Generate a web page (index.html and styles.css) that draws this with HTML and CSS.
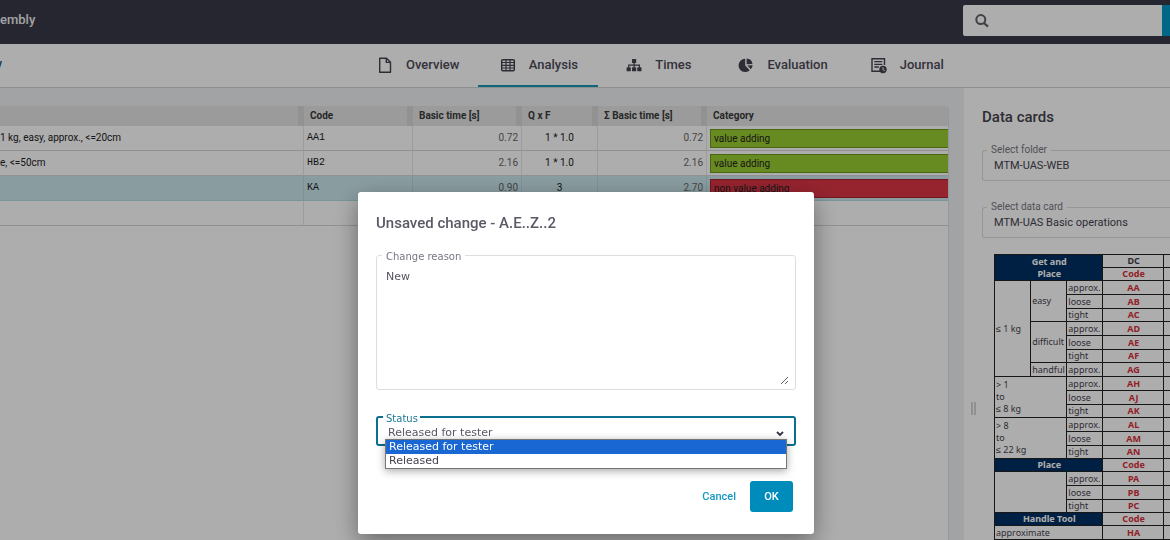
FILE: index.html
```html
<!DOCTYPE html>
<html lang="en">
<head>
<meta charset="utf-8">
<title>Analysis</title>
<link rel="stylesheet" href="styles.css">
</head>
<body>
<div class="app">
  <header class="topbar">
    <span class="topbar-title">embly</span>
    <form class="search">
      <label class="search-box" aria-label="Search">
        <svg width="14" height="14" viewBox="0 0 14 14"><circle cx="5.8" cy="5.6" r="4.5" fill="none" stroke="#5f5f66" stroke-width="2"/><path d="M9 9l4 3.600" stroke="#5f5f66" stroke-width="2.200"/></svg>
        <input type="search">
      </label>
      <button class="search-go" type="submit" aria-label="Go"></button>
    </form>
  </header>

  <nav class="tabs">
    <div class="tabs-lead"><a class="crumb" href="#">y</a></div>
    <a class="tab" href="#"><svg class="icon" viewBox="0 0 18 18"><path d="M3.700 2.200h6.800l4 4v10.100H3.700zM10.300 2.200v4.200h4.200" fill="none" stroke="#45434f" stroke-width="1.400" stroke-linejoin="round"/></svg>Overview</a>
    <a class="tab active" href="#"><svg class="icon" viewBox="0 0 18 18"><rect x="2.700" y="3.700" width="12.600" height="11" rx="1" fill="none" stroke="#45434f" stroke-width="1.500"/><path d="M3 6.500h12M3 9.300h12M3 12h12M7 4v10.500M11 4v10.500" stroke="#45434f" stroke-width="1.200"/></svg>Analysis</a>
    <a class="tab" href="#"><svg class="icon" viewBox="0 0 18 18"><g fill="#45434f"><rect x="7" y="3" width="4.200" height="4" rx=".6"/><rect x="1.600" y="11.300" width="4.200" height="4" rx=".6"/><rect x="7" y="11.300" width="4.200" height="4" rx=".6"/><rect x="12.300" y="11.300" width="4.200" height="4" rx=".6"/></g><path d="M9.100 6.500v5M3.700 11.500V9.200h10.700v2.300" fill="none" stroke="#45434f" stroke-width="1.200"/></svg>Times</a>
    <a class="tab" href="#"><svg class="icon" viewBox="0 0 18 18"><g fill="#45434f"><path d="M8.200 2.800v6.600l4.500 4.800A6.600 6.600 0 1 1 8.200 2.800z"/><path d="M9.600 2.500a6.300 6.300 0 0 1 5.900 5.600L9.600 8.300z"/><path d="M10.300 9.500l5.300-.2a6 6 0 0 1-1.700 4z"/></g></svg>Evaluation</a>
    <a class="tab" href="#"><svg class="icon" viewBox="0 0 18 18"><path d="M10 15.300H2V2.700h12.500V9" fill="none" stroke="#45434f" stroke-width="1.400"/><path d="M4.300 5.700h8M4.300 8.300h8M4.300 11h4.500" stroke="#45434f" stroke-width="1.300"/><circle cx="13" cy="13.500" r="3.700" fill="#45434f"/><path d="M13 11.300v2.400l1.700 1" fill="none" stroke="#fff" stroke-width="1"/></svg>Journal</a>
  </nav>

  <main class="workspace">
    <section class="analysis">
      <div class="sheet">
        <table class="steps">
          <colgroup><col class="c-name"><col class="c-wide"><col class="c-wide"><col class="c-qf"><col class="c-wide"><col></colgroup>
          <thead><tr><th></th><th>Code</th><th>Basic time [s]</th><th>Q x F</th><th>Σ Basic time [s]</th><th>Category</th></tr></thead>
          <tbody>
            <tr><td class="name">1 kg, easy, approx., &lt;=20cm</td><td class="code">AA1</td><td class="num">0.72</td><td class="qf">1 * 1.0</td><td class="num">0.72</td><td class="cat"><div class="tag good">value adding</div></td></tr>
            <tr><td class="name">e, &lt;=50cm</td><td class="code">HB2</td><td class="num">2.16</td><td class="qf">1 * 1.0</td><td class="num">2.16</td><td class="cat"><div class="tag good">value adding</div></td></tr>
            <tr class="selected"><td class="name"></td><td class="code">KA</td><td class="num">0.90</td><td class="qf">3</td><td class="num">2.70</td><td class="cat"><div class="tag bad">non value adding</div></td></tr>
            <tr><td></td><td></td><td></td><td></td><td></td><td></td></tr>
          </tbody>
        </table>
      </div>
    </section>

    <aside class="cards">
      <div class="grip"><span></span></div>
      <div class="cards-body">
        <h2>Data cards</h2>
        <fieldset class="field side">
          <legend><label for="folder">Select folder</label></legend>
          <select id="folder"><option>MTM-UAS-WEB</option></select>
        </fieldset>
        <fieldset class="field side">
          <legend><label for="card">Select data card</label></legend>
          <select id="card"><option>MTM-UAS Basic operations</option></select>
        </fieldset>
        <table class="card">
          <colgroup><col class="k1"><col class="k1"><col class="k1"><col class="k2"><col class="k2"></colgroup>
          <tbody>
            <tr class="low"><th class="band" colspan="3" rowspan="2">Get and<br>Place</th><th>DC</th><td></td></tr>
            <tr class="low"><th class="red">Code</th><td></td></tr>
            <tr><td rowspan="7">≤ 1 kg</td><td rowspan="3">easy</td><td>approx.</td><th class="red">AA</th><td></td></tr>
            <tr><td>loose</td><th class="red">AB</th><td></td></tr>
            <tr class="low"><td>tight</td><th class="red">AC</th><td></td></tr>
            <tr><td rowspan="3">difficult</td><td>approx.</td><th class="red">AD</th><td></td></tr>
            <tr><td>loose</td><th class="red">AE</th><td></td></tr>
            <tr class="low"><td>tight</td><th class="red">AF</th><td></td></tr>
            <tr><td>handful</td><td>approx.</td><th class="red">AG</th><td></td></tr>
            <tr><td colspan="2" rowspan="3">&gt; 1<br>to<br>≤ 8 kg</td><td>approx.</td><th class="red">AH</th><td></td></tr>
            <tr><td>loose</td><th class="red">AJ</th><td></td></tr>
            <tr class="low"><td>tight</td><th class="red">AK</th><td></td></tr>
            <tr><td colspan="2" rowspan="3">&gt; 8<br>to<br>≤ 22 kg</td><td>approx.</td><th class="red">AL</th><td></td></tr>
            <tr><td>loose</td><th class="red">AM</th><td></td></tr>
            <tr class="low"><td>tight</td><th class="red">AN</th><td></td></tr>
            <tr class="low"><th class="band" colspan="3">Place</th><th class="red">Code</th><td></td></tr>
            <tr><td colspan="2" rowspan="3"></td><td>approx.</td><th class="red">PA</th><td></td></tr>
            <tr><td>loose</td><th class="red">PB</th><td></td></tr>
            <tr class="low"><td>tight</td><th class="red">PC</th><td></td></tr>
            <tr class="low"><th class="band" colspan="3">Handle Tool</th><th class="red">Code</th><td></td></tr>
            <tr><td colspan="3">approximate</td><th class="red">HA</th><td></td></tr>
          </tbody>
        </table>
      </div>
    </aside>
  </main>
</div>

<div class="backdrop">
  <form class="dialog" role="dialog" aria-modal="true" aria-labelledby="dlg-title">
    <h1 id="dlg-title">Unsaved change - A.E..Z..2</h1>
    <fieldset class="field reason">
      <legend><label for="reason">Change reason</label></legend>
      <textarea id="reason">New</textarea>
    </fieldset>
    <fieldset class="field status">
      <legend><label for="status">Status</label></legend>
      <select id="status"><option>Released for tester</option><option>Released</option></select>
      <svg class="chevron" width="8" height="6" viewBox="0 0 8 6"><path d="M1 1l3 3 3-3" fill="none" stroke="#333340" stroke-width="1.800"/></svg>
      <ul class="options" role="listbox" aria-label="Status">
        <li class="current" role="option" aria-selected="true">Released for tester</li>
        <li role="option" aria-selected="false">Released</li>
      </ul>
    </fieldset>
    <div class="actions">
      <button class="cancel" type="button">Cancel</button>
      <button class="ok" type="submit">OK</button>
    </div>
  </form>
</div>
</body>
</html>
```

FILE: styles.css
```css
* { box-sizing: border-box; }

body {
  margin: 0;
  font-family: Roboto, "Liberation Sans", sans-serif;
  color: #45434f;
  overflow: hidden;
}

.app {
  display: flex;
  flex-direction: column;
  height: 100vh;
  background: #fff;
}

/* Top bar */
.topbar {
  flex: none;
  display: flex;
  align-items: flex-start;
  justify-content: space-between;
  height: 44px;
  background: #393847;
}
.topbar-title {
  line-height: 40px;
  font-size: 13px;
  font-weight: 500;
  color: #f0f0f2;
}
.search {
  display: flex;
  width: 207px;
  height: 31px;
  margin-top: 5px;
}
.search-box {
  flex: 1;
  display: flex;
  align-items: center;
  gap: 8px;
  min-width: 0;
  padding-left: 12px;
  background: #fff;
  border-radius: 2px 0 0 2px;
}
.search-box svg { flex: none; }
.search-box input {
  flex: 1;
  min-width: 0;
  border: 0;
  outline: 0;
  background: none;
}
.search-go {
  flex: none;
  width: 8px;
  padding: 0;
  border: 0;
  background: #0098c8;
}

/* Tabs */
.tabs {
  flex: none;
  display: flex;
  height: 44px;
  border-bottom: 1px solid #d0d2d5;
}
.tabs-lead {
  flex: 0 0 357px;
  display: flex;
}
.crumb {
  display: flex;
  justify-content: flex-end;
  width: 2px;
  overflow: hidden;
  line-height: 40px;
  font-size: 13px;
  font-weight: 500;
  color: #1a5a80;
  text-decoration: none;
}
.tab {
  display: flex;
  align-items: center;
  justify-content: center;
  gap: 12px;
  min-width: 120px;
  padding: 0 19px;
  border-bottom: 2px solid transparent;
  font-size: 13px;
  font-weight: 500;
  color: #4c4a57;
  text-decoration: none;
}
.tab.active { border-bottom-color: #1597b5; }
.icon { width: 18px; height: 18px; }

/* Workspace */
.workspace {
  flex: 1;
  min-height: 0;
  display: flex;
}
.analysis {
  flex: 1;
  min-width: 0;
  padding: 18px 15px 0 0;
  background: #edf0f3;
}
.sheet {
  height: 100%;
  background: #fff;
  border-right: 1px solid #dcdee0;
  border-radius: 0 4px 0 0;
  overflow: hidden;
}
.steps {
  width: 100%;
  table-layout: fixed;
  border-collapse: separate;
  border-spacing: 0;
  font-size: 10px;
  line-height: 16px;
}
.c-name { width: 304px; }
.c-wide { width: 109px; }
.c-qf { width: 76px; }
.steps th {
  height: 20px;
  padding: 0 6px;
  border-right: 6px solid #d8d8d8;
  background: #e5e5e5;
  text-align: left;
  font-weight: 700;
  color: #3a3a3a;
}
.steps th:last-child { border-right: 0; }
.steps td {
  height: 25px;
  padding: 0 3px;
  border-right: 1px solid #e6e6e6;
  border-bottom: 1px solid #d6d6d6;
  color: #222;
  white-space: nowrap;
}
.steps td:last-child { border-right: 0; }
.steps .name { padding-left: 0; }
.steps .code { font-family: "Liberation Mono", monospace; }
.steps .num { text-align: right; color: #666; }
.steps .qf { text-align: center; }
.steps .cat { padding-right: 0; }
.steps .selected td { background: #cbe7ed; border-color: #b3dbe4; }
.tag {
  height: 19px;
  padding-left: 3px;
  border: 1px solid;
  border-right: 0;
  line-height: 17px;
}
.good { background: #9acd32; border-color: #6c9a1a; }
.bad { background: #dc3545; border-color: #a52432; }

/* Outlined fields */
.field {
  min-width: 0;
  margin: 0;
  padding: 0 6px 0 5px;
  border: 1px solid #dedede;
  border-radius: 3px;
}
.field legend {
  padding: 0 4px;
  font-size: 10px;
  line-height: 12px;
  color: #777682;
}
.field label { display: block; }
.field select {
  display: block;
  width: 100%;
  appearance: none;
  border: 0;
  outline: 0;
  background: none;
  color: #45434f;
}

/* Data cards */
.cards {
  flex: 0 0 206px;
  display: flex;
  overflow: hidden;
  background: #fff;
}
.grip {
  flex: 0 0 18px;
  display: flex;
  justify-content: center;
  padding-top: 314px;
}
.grip span {
  width: 5px;
  height: 13px;
  border: solid #d4d4d4;
  border-width: 0 2px;
}
.cards-body { flex: 1; min-width: 0; }
.cards h2 {
  margin: 18px 0 16px;
  font-size: 15px;
  font-weight: 500;
  line-height: 22px;
}
.side {
  margin-bottom: 20px;
  padding: 0 0 0 4px;
  border-right: 0;
  border-radius: 3px 0 0 3px;
}
.side select {
  height: 24px;
  padding: 0 7px 6px;
  font: 11px Roboto, sans-serif;
}
.card {
  width: 230px;
  margin-left: 12px;
  margin-top: -4px;
  table-layout: fixed;
  border-collapse: collapse;
  font-family: "Noto Sans", sans-serif;
  font-size: 9px;
  line-height: 12px;
}
.k1 { width: 36px; }
.k2 { width: 60px; }
.card td, .card th {
  height: 14px;
  padding: 0 0 0 1px;
  border: 1px solid #222;
  white-space: nowrap;
}
.card .low > :not([rowspan]) { height: 13px; }
.card .red { color: #d8303a; }
.card .band { background: #003064; color: #fff; }

/* Dialog */
.backdrop {
  position: fixed;
  inset: 0;
  display: flex;
  align-items: flex-start;
  justify-content: center;
  padding: 192px 0 0 2px;
  background: rgba(0, 0, 0, .32);
}
.dialog {
  width: min(456px, 94%);
  padding: 19px 18px 22px;
  border-radius: 3px;
  background: #fff;
  box-shadow: 0 8px 24px rgba(0, 0, 0, .4);
}
.dialog h1 {
  margin: 0 0 12px;
  font-size: 15px;
  font-weight: 500;
  line-height: 24px;
  color: #5b5966;
}
.dialog .field { font-family: "DejaVu Sans", sans-serif; }
.dialog legend { padding-top: 4px; }
.reason { padding-bottom: 4px; }
.reason textarea {
  display: block;
  width: 100%;
  height: 122px;
  padding: 7px 4px;
  border: 0;
  outline: 0;
  resize: vertical;
  background: none;
  font: 11px/14px "DejaVu Sans", sans-serif;
  color: #55535f;
}
.status {
  position: relative;
  margin-top: 19px;
  border: 2px solid #0b6f8f;
}
.status legend { padding: 4px 2px 0 3px; color: #1a7896; }
.status select {
  height: 19px;
  padding: 0 5px 4px;
  font: 11px "DejaVu Sans", sans-serif;
  color: #5b5966;
}
.chevron { position: absolute; right: 10px; top: 6px; }
.options {
  position: absolute;
  left: 7px;
  right: 7px;
  top: 14px;
  margin: 0;
  padding: 0;
  border: 1px solid #767676;
  background: #fff;
  box-shadow: 0 2px 8px rgba(0, 0, 0, .35);
  list-style: none;
  font-size: 11px;
  line-height: 14px;
}
.options li { padding-left: 3px; }
.options .current { background: #1967d2; color: #fff; }
.actions {
  display: flex;
  justify-content: flex-end;
  gap: 14px;
  margin: 35px 3px 0 0;
}
.actions button {
  height: 31px;
  padding: 0;
  border: 0;
  border-radius: 3px;
  background: none;
  font: 500 11px Roboto, sans-serif;
  color: #1597c4;
}
.actions .ok { width: 43px; background: #008cba; color: #fff; }
```
